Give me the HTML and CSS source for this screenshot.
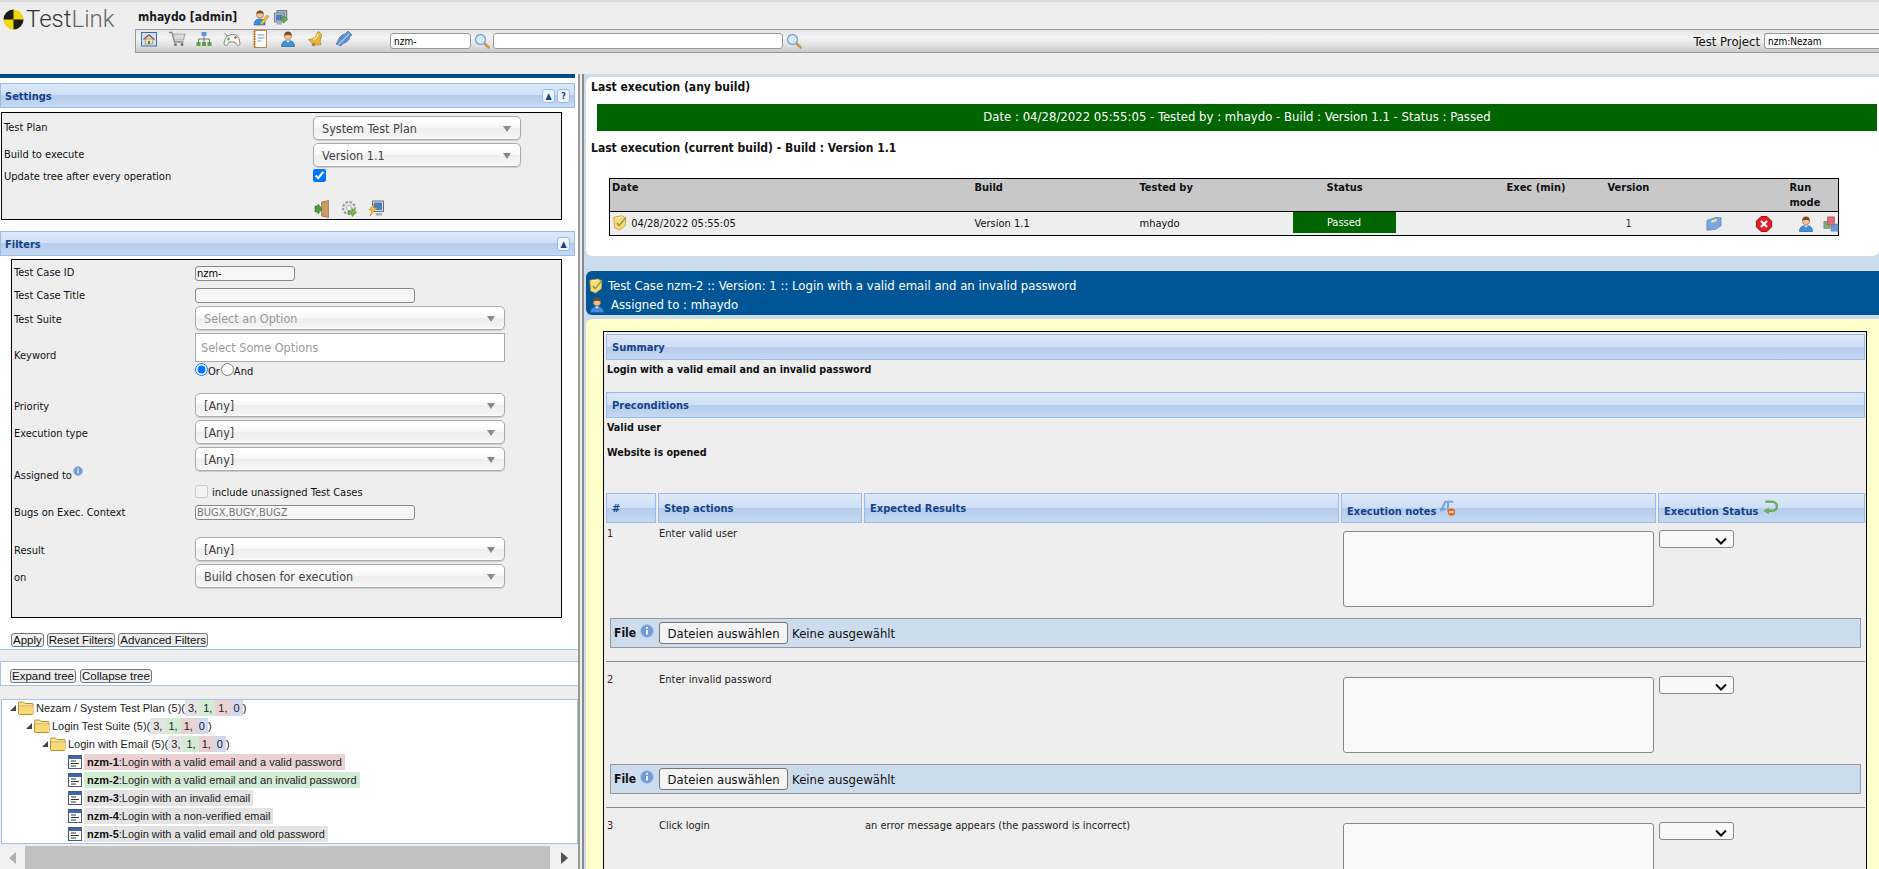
FILE: index.html
```html
<!DOCTYPE html>
<html>
<head>
	<meta charset="UTF-8">
	<title>TestLink - Execute</title>
	<link rel="stylesheet" href="styles.css">
</head>

<body>
	<svg class="defs" width="0" height="0">
		<symbol id="i-user" viewBox="0 0 16 16">
			<path d="M1.500 15.500c0-4 2.500-6 6.500-6s6.500 2 6.500 6z" fill="#3f8fe0" stroke="#2a5d9c" stroke-width=".7"/>
			<path d="M6 9.500l2 2 2-2z" fill="#fff"/>
			<circle cx="8" cy="5.200" r="3.600" fill="#f2c39a" stroke="#a8713f" stroke-width=".6"/>
			<path d="M4.200 5c0-3 1.500-4.400 3.800-4.400S11.800 2 11.800 5C10.500 3.700 6 3.500 4.200 5z" fill="#7a4a22"/>
		</symbol>
		<symbol id="i-note" viewBox="0 0 16 18">
			<path d="M1 2.500L10 1l4.500 2-.5 9-6.500 5L2 14.500z" fill="#f7da7c" stroke="#c2922a" stroke-width=".8"/>
			<path d="M3 3.500l7-1.200" stroke="#fff2b8"/>
			<path d="M4.500 9l2.500 3 7.500-9" fill="none" stroke="#8a9a3a" stroke-width="1.600"/>
		</symbol>
		<symbol id="i-search" viewBox="0 0 16 16">
			<path d="M10 10l4.500 4.500" stroke="#c79a4a" stroke-width="2.600" stroke-linecap="round"/>
			<circle cx="6.500" cy="6.500" r="5" fill="#dbeafa" stroke="#7ba3d1" stroke-width="1.300"/>
		</symbol>
		<symbol id="i-folder" viewBox="0 0 16 14">
			<path d="M.5 3.500V2q0-1 1-1h4l1.500 1.500h7q1 0 1 1V12.500q0 1-1 1h-12.500q-1 0-1-1z" fill="#f6e3a1" stroke="#b8902c"/>
			<path d="M1 5h14" stroke="#c9a23e"/>
			<path d="M1 5.500h14V12.500q0 .5-.5.5h-13q-.5 0-.5-.5z" fill="#f9da72"/>
		</symbol>
		<symbol id="i-leaf" viewBox="0 0 14 14">
			<rect x=".5" y=".5" width="13" height="13" fill="#fff" stroke="#4a5a78"/>
			<rect x="1" y="1" width="12" height="3" fill="#3f66ad"/>
			<path d="M3 6h5M3 8.500h8M3 11h5" stroke="#333"/>
		</symbol>
		<symbol id="i-info" viewBox="0 0 14 14">
			<circle cx="7" cy="7" r="6.300" fill="#6f9ad6" stroke="#9dbbe4"/>
			<path d="M7 6v4.500" stroke="#fff" stroke-width="1.800"/>
			<circle cx="7" cy="3.800" r="1.100" fill="#fff"/>
		</symbol>
		<symbol id="i-tool-home" viewBox="0 0 16 16">
			<rect x=".5" y="1.500" width="15" height="13.500" fill="#cfe0f5" stroke="#3a6ea8"/>
			<path d="M2.500 8.500L8 4l5.500 4.500" fill="none" stroke="#a5562c" stroke-width="1.400"/>
			<rect x="4.500" y="8" width="7" height="5" fill="#f3e1b5" stroke="#8a6a3a" stroke-width=".5"/>
			<rect x="7" y="10" width="2" height="3" fill="#3d8a3d"/>
		</symbol>
		<symbol id="i-tool-cart" viewBox="0 0 18 16">
			<path d="M1 1.500h3l2.500 9.500h9" fill="none" stroke="#8d8d8d" stroke-width="1.300"/>
			<path d="M4.500 3h12.500l-1.500 6H6z" fill="#c8c8c8" stroke="#8d8d8d" stroke-width=".7"/>
			<path d="M7 5h9M7 7h8.500M8 3v6M11 3v6M14 3v6" stroke="#eee" stroke-width=".6"/>
			<circle cx="7.500" cy="13.500" r="1.500" fill="#777"/>
			<circle cx="14" cy="13.500" r="1.500" fill="#777"/>
		</symbol>
		<symbol id="i-tool-tree" viewBox="0 0 16 16">
			<rect x="5.500" y="1" width="5" height="4" fill="#5f93d6"/>
			<path d="M8 5v3M2.500 11V8h11v3M8 8v3" fill="none" stroke="#777"/>
			<rect x=".5" y="11" width="4" height="4" fill="#5da04a"/>
			<rect x="6" y="11" width="4" height="4" fill="#5da04a"/>
			<rect x="11.500" y="11" width="4" height="4" fill="#5da04a"/>
		</symbol>
		<symbol id="i-tool-pad" viewBox="0 0 18 16">
			<path d="M1.500 2l3 3M4 5q5-2.500 9.500-1 3.500 3 3.500 8.500 0 2-1.500 2-2 0-3.500-3.500h-6q-1.500 3.500-3 3.500T1 12.500Q1.200 8 4 5z" fill="#f4f4f4" stroke="#888"/>
			<circle cx="12.500" cy="6.500" r="1.300" fill="#d2504a"/>
			<path d="M4 8h3M5.500 6.500v3" stroke="#5aa04a" stroke-width="1.200"/>
		</symbol>
		<symbol id="i-tool-book" viewBox="0 0 14 18">
			<rect x="1.500" y=".5" width="12" height="17" fill="#fbfbfb" stroke="#b98a4a"/>
			<path d="M1.500 1v16" stroke="#c5762e" stroke-width="2.200" stroke-dasharray="1.500 1"/>
			<path d="M4.500 5h7M4.500 8h7M4.500 11h4" stroke="#7ba3d1" stroke-width="1.100"/>
		</symbol>
		<symbol id="i-tool-bell" viewBox="0 0 18 18">
			<path d="M12 1.500c3 1 4.500 4 3 6.500-1 2-1 4 0 6.500-4.500 1.500-9 -.5-12.500-5 3.500-.5 6-1.500 7.500-3.500 1-1.500 1-3 2-4.500z" fill="#e9b63e" stroke="#a87a1f" stroke-width=".7"/>
			<circle cx="7.500" cy="14.500" r="1.800" fill="#b9822a"/>
			<path d="M12 4q-1 4-5 5.500" stroke="#f8e7a8" fill="none" stroke-width="1.200"/>
		</symbol>
		<symbol id="i-tool-plug" viewBox="0 0 18 18">
			<path d="M13 1l4 4-2 1.500-1 3-3 3-3 1-2 2.500-5-2 2-3 1-3 3-3 3-1z" fill="#5d8fd0" stroke="#3d6ba8" stroke-width=".6"/>
			<path d="M3.500 14.500L14 4" stroke="#a9c6ea" stroke-width="1.400"/>
		</symbol>
		<symbol id="i-edit-user" viewBox="0 0 16 16">
			<circle cx="7" cy="4.500" r="3.500" fill="#f2c39a" stroke="#8a5a2a" stroke-width=".6"/>
			<path d="M3.500 4c0-2.400 1.500-3.500 3.500-3.500s3.500 1 3.500 3.500C9 3 5 3 3.500 4z" fill="#7a4a22"/>
			<path d="M1 15c0-4 2-6 6-6s5 2 5 4v2z" fill="#3f8fe0" stroke="#2a5d9c" stroke-width=".6"/>
			<path d="M7 15l1-3 6-7 2 1.500-6 7.500z" fill="#eec14a" stroke="#a87a1f" stroke-width=".6"/>
		</symbol>
		<symbol id="i-monitor" viewBox="0 0 16 18">
			<rect x="3.500" y=".5" width="11" height="10" fill="#aab4bf" stroke="#67707a"/>
			<rect x=".5" y="3.500" width="11" height="10" fill="#d9dfe5" stroke="#67707a"/>
			<rect x="2" y="5" width="8" height="7" fill="#4f7fb8"/>
			<rect x="3" y="14.500" width="6" height="2" fill="#a5adb6"/>
			<path d="M8 9h3V6.500l4.500 4-4.500 4V12H8z" fill="#6fb04a" stroke="#3f7a2a" stroke-width=".6"/>
		</symbol>
		<symbol id="i-door" viewBox="0 0 16 18">
			<path d="M7.500 2l7-1.500v17l-7-1.500z" fill="#c99a62" stroke="#8a5f2c" stroke-width=".6"/>
			<path d="M1 6h3V4l4 5-4 5v-2H1z" fill="#4f9a46" stroke="#2f6a2a" stroke-width=".6"/>
		</symbol>
		<symbol id="i-gear" viewBox="0 0 16 18">
			<circle cx="8" cy="8" r="6" fill="#e6e6e6" stroke="#999" stroke-width="2" stroke-dasharray="2.500 1.500"/>
			<circle cx="8" cy="8" r="2.500" fill="#fff" stroke="#aaa"/>
			<path d="M7 11h4V8.500l4.500 4-4.500 4V14H7z" fill="#7ab84a" stroke="#4a8a2a" stroke-width=".6"/>
		</symbol>
		<symbol id="i-bolt" viewBox="0 0 16 18">
			<rect x="4.500" y="1" width="11" height="10.500" fill="#d9dfe5" stroke="#67707a"/>
			<rect x="6" y="2.500" width="8" height="7.500" fill="#4f7fb8"/>
			<rect x="8" y="13" width="6" height="2.500" fill="#a5adb6"/>
			<path d="M6 4L1 10h3l-2 6 7-8H5.500z" fill="#f3c63f" stroke="#b98a1f" stroke-width=".6"/>
		</symbol>
		<symbol id="i-open" viewBox="0 0 18 16">
			<path d="M1 4l10-3.500 6 .5v9l-6 4-10 1z" fill="#7aa7e0" stroke="#4f7fb8" stroke-width=".7"/>
			<path d="M6 4l6-2v3l-6 2z" fill="#f3e5a0"/>
		</symbol>
		<symbol id="i-delete" viewBox="0 0 16 16">
			<path d="M5 .5h6L15.500 5v6L11 15.500H5L.5 11V5z" fill="#e21f26" stroke="#a81218"/>
			<path d="M5 5l6 6M11 5l-6 6" stroke="#fff" stroke-width="2.200"/>
		</symbol>
		<symbol id="i-cubes" viewBox="0 0 18 18">
			<rect x="1" y="6" width="7" height="8" fill="#7cae7a" stroke="#4f7f4f" stroke-width=".6"/>
			<rect x="9" y="9" width="8" height="8" fill="#6f9ad6" stroke="#4f7fb8" stroke-width=".6"/>
			<rect x="5" y="1" width="8" height="9" fill="#de6a72" stroke="#a8434a" stroke-width=".6"/>
		</symbol>
		<symbol id="i-eraser" viewBox="0 0 14 14">
			<path d="M1 10L4.500 1.500h7M7 1.500V10M0 8h5" fill="none" stroke="#7ba3dd" stroke-width="1.800"/>
			<circle cx="10" cy="10.500" r="3.200" fill="#e2661f"/>
			<path d="M8 10.500h4" stroke="#fff" stroke-width="1.200"/>
		</symbol>
		<symbol id="i-back" viewBox="0 0 14 14">
			<path d="M3 1.500h6a4 4 0 010 8H5" fill="none" stroke="#6cae5a" stroke-width="2.200"/>
			<path d="M6 6.500v6L1 9.500z" fill="#6cae5a"/>
		</symbol>
	</svg>

	<div id="header">
		<div class="logo-row">
			<div class="logo">
				<svg class="logo-mark" viewBox="0 0 22 22">
					<circle cx="11" cy="11" r="10.500" fill="#f0d808"/>
					<path d="M11 11V.5a10.500 10.500 0 00-10.500 10.500zM11 11v10.500A10.500 10.500 0 0021.500 11z" fill="#1c1c1c"/>
				</svg>
				<span class="logo-text">Test<span class="logo-link">Link</span></span>
			</div>
			<div class="header-main">
				<div class="user-line">
					<span class="user-name">mhaydo [admin]</span>
					<svg class="ic ic-16"><use href="#i-edit-user"/></svg>
					<svg class="ic ic-16"><use href="#i-monitor"/></svg>
				</div>
				<div class="toolbar">
					<div class="tool-icons">
						<svg class="ic ic-16"><use href="#i-tool-home"/></svg>
						<svg class="ic ic-18"><use href="#i-tool-cart"/></svg>
						<svg class="ic ic-16"><use href="#i-tool-tree"/></svg>
						<svg class="ic ic-18"><use href="#i-tool-pad"/></svg>
						<svg class="ic ic-18"><use href="#i-tool-book"/></svg>
						<svg class="ic ic-16"><use href="#i-user"/></svg>
						<svg class="ic ic-18"><use href="#i-tool-bell"/></svg>
						<svg class="ic ic-18"><use href="#i-tool-plug"/></svg>
					</div>
					<input class="tool-input tool-id" type="text" value="nzm-">
					<svg class="ic ic-16"><use href="#i-search"/></svg>
					<input class="tool-input tool-search" type="text">
					<svg class="ic ic-16"><use href="#i-search"/></svg>
					<span class="project-label">Test Project</span>
					<input class="tool-input tool-project" type="text" value="nzm:Nezam">
				</div>
			</div>
		</div>
	</div>

	<div id="main">
		<div id="left">
			<div class="left-top"></div>

			<div class="section-head">
				<span>Settings</span>
				<span class="head-btns"><span class="head-btn">&#9650;</span><span class="head-btn">?</span></span>
			</div>
			<div class="left-body settings-body">
				<div class="box settings-box">
					<label class="lbl">Test Plan</label>
					<div class="fake-select dark">System Test Plan</div>
					<label class="lbl">Build to execute</label>
					<div class="fake-select dark">Version 1.1</div>
					<label class="lbl">Update tree after every operation</label>
					<input class="check" type="checkbox" checked>
					<span></span>
					<div class="settings-icons">
						<svg class="ic ic-18"><use href="#i-door"/></svg>
						<svg class="ic ic-18"><use href="#i-gear"/></svg>
						<svg class="ic ic-18"><use href="#i-bolt"/></svg>
					</div>
				</div>
			</div>

			<div class="section-head filters-head">
				<span>Filters</span>
				<span class="head-btns"><span class="head-btn">&#9650;</span></span>
			</div>
			<div class="left-body filters-body">
				<div class="box filter-box">
					<label class="lbl">Test Case ID</label>
					<input class="text-in w-short" type="text" value="nzm-">
					<label class="lbl">Test Case Title</label>
					<input class="text-in w-long" type="text">
					<label class="lbl lbl-sel">Test Suite</label>
					<div class="fake-select muted">Select an Option</div>
					<label class="lbl lbl-key">Keyword</label>
					<div>
						<div class="fake-multi">Select Some Options</div>
						<div class="radios">
							<input type="radio" name="kw" checked><span>Or</span>
							<input type="radio" name="kw"><span>And</span>
						</div>
					</div>
					<label class="lbl lbl-sel">Priority</label>
					<div class="fake-select">[Any]</div>
					<label class="lbl lbl-sel">Execution type</label>
					<div class="fake-select">[Any]</div>
					<label class="lbl lbl-assign">Assigned to<svg class="ic ic-10"><use href="#i-info"/></svg></label>
					<div class="fake-select">[Any]</div>
					<span></span>
					<div class="include"><input class="check-off" type="checkbox" disabled><span>include unassigned Test Cases</span></div>
					<label class="lbl">Bugs on Exec. Context</label>
					<input class="text-in w-long hint" type="text" value="BUGX,BUGY,BUGZ">
					<label class="lbl lbl-sel">Result</label>
					<div class="fake-select">[Any]</div>
					<label class="lbl lbl-sel">on</label>
					<div class="fake-select">Build chosen for execution</div>
				</div>
				<div class="filter-btns">
					<button class="btn">Apply</button>
					<button class="btn">Reset Filters</button>
					<button class="btn">Advanced Filters</button>
				</div>
			</div>

			<div class="tree-area">
				<div class="tree-btns">
					<button class="btn">Expand tree</button>
					<button class="btn">Collapse tree</button>
				</div>

				<div class="tree">
					<div class="node lv0"><span class="tog"></span><svg class="folder"><use href="#i-folder"/></svg>Nezam / System Test Plan (5)(<span class="c-n">3,</span><span class="c-p">1,</span><span class="c-f">1,</span><span class="c-b">0</span>)</div>
					<div class="node lv1"><span class="tog"></span><svg class="folder"><use href="#i-folder"/></svg>Login Test Suite (5)(<span class="c-n">3,</span><span class="c-p">1,</span><span class="c-f">1,</span><span class="c-b">0</span>)</div>
					<div class="node lv2"><span class="tog"></span><svg class="folder"><use href="#i-folder"/></svg>Login with Email (5)(<span class="c-n">3,</span><span class="c-p">1,</span><span class="c-f">1,</span><span class="c-b">0</span>)</div>
					<div class="node leaf"><svg class="leaf-ic"><use href="#i-leaf"/></svg><span class="c-f"><b>nzm-1</b>:Login with a valid email and a valid password</span></div>
					<div class="node leaf"><svg class="leaf-ic"><use href="#i-leaf"/></svg><span class="c-p"><b>nzm-2</b>:Login with a valid email and an invalid password</span></div>
					<div class="node leaf"><svg class="leaf-ic"><use href="#i-leaf"/></svg><span class="c-n"><b>nzm-3</b>:Login with an invalid email</span></div>
					<div class="node leaf"><svg class="leaf-ic"><use href="#i-leaf"/></svg><span class="c-n"><b>nzm-4</b>:Login with a non-verified email</span></div>
					<div class="node leaf"><svg class="leaf-ic"><use href="#i-leaf"/></svg><span class="c-n"><b>nzm-5</b>:Login with a valid email and old password</span></div>
				</div>
				<div class="hscroll">
					<span class="arrow-l"></span>
					<span class="thumb"></span>
					<span class="arrow-r"></span>
				</div>
			</div>
		</div>

		<div id="splitter"></div>

		<div id="right">
			<div class="last-exec">
				<div class="exec-title">Last execution (any build)</div>
				<div class="exec-banner">Date : 04/28/2022 05:55:05 - Tested by : mhaydo - Build : Version 1.1 - Status : Passed</div>
				<div class="exec-title current">Last execution (current build) - Build : Version 1.1</div>
				<table class="exec-table">
					<tr>
						<th class="col-date">Date</th>
						<th class="col-build">Build</th>
						<th class="col-tester">Tested by</th>
						<th class="col-status">Status</th>
						<th class="col-min">Exec (min)</th>
						<th class="col-ver">Version</th>
						<th class="col-a"></th>
						<th class="col-b"></th>
						<th class="col-run">Run<br>mode</th>
					</tr>
					<tr>
						<td><svg class="ic ic-16 note-ic"><use href="#i-note"/></svg> 04/28/2022 05:55:05</td>
						<td>Version 1.1</td>
						<td>mhaydo</td>
						<td class="passed-wrap"><div class="passed">Passed</div></td>
						<td></td>
						<td class="ver">1</td>
						<td><svg class="ic ic-16"><use href="#i-open"/></svg></td>
						<td><svg class="ic ic-16"><use href="#i-delete"/></svg></td>
						<td class="run-ics"><svg class="ic ic-16"><use href="#i-user"/></svg><svg class="ic ic-16 cubes"><use href="#i-cubes"/></svg></td>
					</tr>
				</table>
			</div>

			<div class="case-bar">
				<div class="case-line"><svg class="ic ic-16"><use href="#i-note"/></svg>Test Case nzm-2 :: Version: 1 :: Login with a valid email and an invalid password</div>
				<div class="case-line assigned"><svg class="ic ic-16"><use href="#i-user"/></svg>Assigned to : mhaydo</div>
			</div>

			<div class="case-body">
				<div class="case-box">
					<div class="section-head small">Summary</div>
					<div class="para bold">Login with a valid email and an invalid password</div>
					<div class="section-head small precond">Preconditions</div>
					<div class="para bold">Valid user</div>
					<div class="para bold second">Website is opened</div>

					<div class="step-grid step-head">
						<div class="section-head cell">#</div>
						<div class="section-head cell">Step actions</div>
						<div class="section-head cell">Expected Results</div>
						<div class="section-head cell low">Execution notes <svg class="ic ic-16 raised"><use href="#i-eraser"/></svg></div>
						<div class="section-head cell low">Execution Status <svg class="ic ic-16 raised"><use href="#i-back"/></svg></div>
					</div>

					<div class="step first">
						<div class="step-grid">
							<div class="step-txt num">1</div>
							<div class="step-txt">Enter valid user</div>
							<div class="step-txt"></div>
							<textarea class="notes"></textarea>
							<div><select class="status"><option></option></select></div>
						</div>
						<div class="file-bar"><b>File</b><svg class="ic ic-14"><use href="#i-info"/></svg><button class="file-btn">Dateien auswählen</button><span>Keine ausgewählt</span></div>
					</div>

					<div class="step">
						<div class="step-grid">
							<div class="step-txt num">2</div>
							<div class="step-txt">Enter invalid password</div>
							<div class="step-txt"></div>
							<textarea class="notes"></textarea>
							<div><select class="status"><option></option></select></div>
						</div>
						<div class="file-bar"><b>File</b><svg class="ic ic-14"><use href="#i-info"/></svg><button class="file-btn">Dateien auswählen</button><span>Keine ausgewählt</span></div>
					</div>

					<div class="step">
						<div class="step-grid">
							<div class="step-txt num">3</div>
							<div class="step-txt">Click login</div>
							<div class="step-txt">an error message appears (the password is incorrect)</div>
							<textarea class="notes"></textarea>
							<div><select class="status"><option></option></select></div>
						</div>
					</div>
				</div>
			</div>
		</div>
	</div>
</body>
</html>
```

FILE: styles.css
```css
*
{
	box-sizing: border-box;
}
html, body
{
	margin: 0;
	height: 100%;
	overflow: hidden;
}
body
{
	background: #eeeeee;
	color: #111111;
	font-family: "DejaVu Sans Condensed", "DejaVu Sans", sans-serif;
	font-stretch: condensed;
	font-size: 11px;
	line-height: 15px;
}
.defs
{
	position: absolute;
}
.ic
{
	display: inline-block;
	flex: none;
	vertical-align: middle;
}
.ic-10 { width: 10px; height: 10px; vertical-align: 3px; margin-left: 1px; }
.ic-14 { width: 14px; height: 14px; }
.ic-16 { width: 16px; height: 16px; }
.ic-18 { width: 18px; height: 18px; }

/* ---------- header ---------- */
#header
{
	height: 74px;
	border-top: 2px solid #dddddd;
	padding-top: 1px;
	overflow: hidden;
}
.logo-row
{
	display: flex;
}
.logo
{
	width: 135px;
	padding: 5px 0 0 3px;
	display: flex;
	align-items: center;
	height: 27px;
}
.logo-mark
{
	width: 21px;
	height: 21px;
	flex: none;
}
.logo-text
{
	font-family: Roboto, sans-serif;
	font-stretch: normal;
	font-weight: 300;
	font-size: 24px;
	color: #333333;
	margin-left: 2px;
}
.logo-link
{
	color: #666666;
}
.header-main
{
	flex: 1;
	min-width: 0;
}
.user-line
{
	height: 26px;
	padding: 3px 0 0 3px;
	display: flex;
	align-items: center;
	gap: 4px;
}
.user-name
{
	font-size: 12px;
	font-weight: bold;
	color: #1a1a1a;
	margin-right: 12px;
}
.toolbar
{
	height: 24px;
	display: flex;
	align-items: center;
	background: linear-gradient(#e4e4e4, #f4f4f4 35%, #e0e0e0 70%, #c9c9c9);
	border: 1px solid #9a9a9a;
	border-right: 0;
	padding-left: 5px;
}
.tool-icons
{
	display: flex;
	align-items: center;
	gap: 10.5px;
	width: 249px;
	margin-top: -4px;
}
.tool-input
{
	height: 16px;
	border: 1px solid #999999;
	border-radius: 3px;
	background: #ffffff;
	font: 10px "DejaVu Sans Condensed", "DejaVu Sans", sans-serif;
	font-stretch: condensed;
	padding: 0 3px;
	outline: none;
}
.tool-id
{
	width: 81px;
	margin-right: 3px;
}
.tool-search
{
	width: 290px;
	margin: 0 3px 0 3px;
}
.project-label
{
	margin-left: auto;
	font-size: 13px;
	margin-right: 4px;
}
.tool-project
{
	width: 115px;
	border-right: 0;
	border-radius: 3px 0 0 3px;
}

/* ---------- left column ---------- */
#main
{
	display: flex;
	height: 795px;
}
#left
{
	width: 578px;
	flex: none;
	background: #ffffff;
	overflow: hidden;
}
.left-top
{
	height: 9px;
	width: 575px;
	background: linear-gradient(#00467e, #005596 4px, #005596 4px, #ffffff 4px);
}
.section-head
{
	height: 26px;
	border: 1px solid #99bbe8;
	background: linear-gradient(#dce8f8, #cfdff5 48%, #b4cbec 50%, #c6d9f2);
	color: #15428b;
	font-weight: bold;
	font-size: 11px;
	padding: 1px 4px 0;
	display: flex;
	align-items: center;
	justify-content: space-between;
}
#left .section-head
{
	width: 575px;
	height: 25px;
}
.head-btns
{
	display: flex;
	gap: 2px;
	margin-top: -1px;
}
.head-btn
{
	width: 13px;
	height: 14px;
	border: 1px solid #99bbe8;
	border-radius: 3px;
	background: #eef4fc;
	color: #15428b;
	font-size: 9px;
	line-height: 12px;
	text-align: center;
}
.left-body
{
	padding: 4px 0 0 1px;
}
.settings-body
{
	height: 123px;
}
.box
{
	border: 1px solid #000000;
	background: #eeeeee;
}
.settings-box
{
	width: 561px;
	height: 108px;
	padding: 3px 0 0 2px;
	display: grid;
	grid-template-columns: 309px 208px;
	grid-template-rows: 27px 27px 28px 1fr;
}
.lbl
{
	display: block;
	align-self: start;
}
.settings-box .lbl
{
	margin-top: 4px;
}
.settings-box .lbl:nth-of-type(3)
{
	margin-top: -1px;
}
.fake-select
{
	height: 24px;
	border: 1px solid #aaaaaa;
	border-radius: 5px;
	background: linear-gradient(#ffffff 20%, #f6f6f6 50%, #eeeeee 52%, #f4f4f4 90%, #ffffff);
	box-shadow: 0 0 2px #ffffff inset, 0 1px 1px rgba(0, 0, 0, .15);
	color: #444444;
	font-size: 12.500px;
	line-height: 24px;
	padding-left: 8px;
	position: relative;
}
.fake-select::after
{
	content: "";
	position: absolute;
	right: 9px;
	top: 9px;
	border: 4px solid transparent;
	border-top: 6px solid #888888;
	border-bottom: 0;
}
.fake-select.muted
{
	color: #999999;
}
.check
{
	width: 13px;
	height: 13px;
	margin: -1px 0 0 0;
	accent-color: #0075ff;
}
.settings-icons
{
	display: flex;
	gap: 9px;
	padding-top: 2px;
}

.filters-body
{
	height: 394px;
	width: 578px;
	padding: 3px 0 0 11px;
	border-bottom: 1px solid #a4c4ec;
}
.filter-box
{
	width: 551px;
	height: 359px;
	padding: 6px 0 0 2px;
	display: grid;
	grid-template-columns: 181px 310px;
	grid-template-rows: 22px 18px 27px 60px 27px 27px 38px 20px 32px 27px 27px;
}
.filter-box .lbl:first-child { margin-top: -1px; }
.lbl-sel { margin-top: 5px; }
.filter-box .lbl-sel { margin-top: 6px; }
.lbl-key { margin-top: 15px; }
.lbl-assign { margin-top: 19px; }
.text-in
{
	display: block;
	height: 15px;
	border: 1px solid #888888;
	border-radius: 3px;
	background: #f6f6f6;
	font: 11px "DejaVu Sans Condensed", "DejaVu Sans", sans-serif;
	font-stretch: condensed;
	padding: 0 1px;
	outline: none;
}
.w-short { width: 100px; }
.w-long { width: 220px; }
.hint { color: #777777; }
.fake-multi
{
	height: 29px;
	border: 1px solid #aaaaaa;
	background: #ffffff;
	color: #999999;
	font-size: 12.500px;
	line-height: 28px;
	padding-left: 5px;
}
.radios
{
	display: flex;
	align-items: center;
	height: 16px;
	margin-top: 1px;
}
.radios input
{
	width: 13px;
	height: 13px;
	margin: -3px 0 0 0;
}
.radios span
{
	margin-right: 1px;
}
.include
{
	display: flex;
	gap: 3px;
	align-items: center;
	height: 14px;
}
.check-off
{
	width: 13px;
	height: 13px;
	margin: -2px 1px 0 0;
}
.filter-btns
{
	padding-top: 15px;
	display: flex;
	gap: 3px;
}
.btn
{
	height: 14px;
	padding: 0 1px;
	border: 1px solid #777777;
	border-radius: 3px;
	background: #eeeeee;
	color: #111111;
	font-family: "Liberation Sans", sans-serif;
	font-size: 11.500px;
	line-height: 12px;
}
.tree-area
{
	background: #eeeeee;
	padding-top: 11px;
	height: 219px;
}
.tree-btns
{
	width: 578px;
	height: 25px;
	border: 1px solid #a4c4ec;
	border-right: 0;
	background: #ffffff;
	padding: 7px 0 0 9px;
	display: flex;
	gap: 4px;
}
.tree
{
	width: 577px;
	height: 145px;
	margin: 13px 0 0 1px;
	border: 1px solid #a4c4ec;
	background: #ffffff;
	font-family: "Liberation Sans", sans-serif;
	font-size: 11px;
	line-height: 18px;
	color: #222222;
	overflow: hidden;
}
.node
{
	height: 18px;
	padding-bottom: 2px;
	display: flex;
	align-items: center;
	white-space: pre;
}
.lv0 { padding-left: 8px; }
.lv1 { padding-left: 24px; }
.lv2 { padding-left: 40px; }
.leaf { padding-left: 66px; }
.tog
{
	width: 0;
	height: 0;
	margin-right: 2px;
	border-style: solid;
	border-width: 0 0 6px 6px;
	border-color: transparent transparent #444444 transparent;
}
.folder
{
	width: 16px;
	height: 14px;
	margin-right: 2px;
	flex: none;
}
.leaf-ic
{
	width: 14px;
	height: 14px;
	flex: none;
	margin-right: 2px;
}
.c-n, .c-p, .c-f, .c-b
{
	padding: 0 3px;
	height: 16px;
	line-height: 16px;
}
.c-n { background: #e4e4e4; }
.c-p { background: #d2ecd4; }
.c-f { background: #ead2d2; }
.c-b { background: #d4d8ee; }
.leaf b
{
	color: #111111;
}
.hscroll
{
	height: 23px;
	margin-top: 2px;
	display: flex;
	align-items: center;
	width: 578px;
	background: #f1f1f1;
}
.arrow-l, .arrow-r
{
	width: 0;
	height: 0;
	border-style: solid;
	border-width: 6px 0;
	border-color: transparent;
}
.arrow-l
{
	border-right: 7px solid #b0b0b0;
	margin: 0 9px 0 9px;
}
.thumb
{
	width: 525px;
	height: 23px;
	background: #c1c1c1;
}
.arrow-r
{
	border-left: 7px solid #505050;
	margin-left: 11px;
}

#splitter
{
	width: 6px;
	flex: none;
	background: #eeeeee;
	border-left: 2px solid #999999;
	border-right: 2px solid #8a8a8a;
}

/* ---------- right column ---------- */
#right
{
	flex: 1;
	min-width: 0;
	background: #cddcec;
	padding: 3px 0 0 2px;
	overflow: hidden;
}
.last-exec
{
	height: 179px;
	background: #ffffff;
	border-radius: 6px 0 6px 6px;
	padding: 2px 2px 0 5px;
}
.exec-title
{
	font-size: 12px;
	font-weight: bold;
	line-height: 16px;
}
.exec-banner
{
	margin: 9px 0 0 6px;
	height: 27px;
	background: #006400;
	color: #ffffff;
	font-size: 13px;
	line-height: 26px;
	text-align: center;
}
.current
{
	margin-top: 9px;
}
.exec-table
{
	width: 1230px;
	margin: 22px 0 0 18px;
	border: 1px solid #000000;
	border-collapse: collapse;
	table-layout: fixed;
}
.exec-table th
{
	height: 33px;
	background: #c8c8c8;
	border-bottom: 1px solid #000000;
	font-weight: bold;
	font-size: 11px;
	text-align: left;
	vertical-align: top;
	padding: 1px 2px 0;
}
.exec-table td
{
	height: 23px;
	background: #eeeeee;
	padding: 0 2px;
}
.col-date { width: 363px; }
.col-build { width: 165px; }
.col-tester { width: 155px; }
.exec-table .col-status { width: 212px; padding-left: 34px; }
.col-min { width: 101px; }
.col-ver { width: 98px; }
.col-a { width: 50px; }
.col-b { width: 34px; }
.note-ic
{
	margin-top: -2px;
}
.exec-table .passed-wrap
{
	padding: 0 0 2px;
	vertical-align: top;
}
.passed
{
	width: 103px;
	height: 21px;
	background: #006400;
	color: #ffffff;
	line-height: 21px;
	text-align: center;
}
.exec-table .ver
{
	color: #5a1a5a;
	padding-left: 20px;
}
.exec-table .run-ics
{
	padding: 0 0 0 10px;
	white-space: nowrap;
}
.cubes
{
	margin-left: 9px;
}
.case-bar
{
	height: 44px;
	margin-top: 15px;
	background: #005596;
	border-radius: 6px 0 0 6px;
	color: #ffffff;
	font-size: 13px;
	padding: 5px 0 0 2px;
}
.case-line
{
	height: 19px;
	display: flex;
	align-items: center;
	gap: 4px;
}
.assigned
{
	padding-left: 1px;
	gap: 6px;
}
.case-body
{
	margin-top: 4px;
	height: 560px;
	background: #ffffcc;
	border-radius: 6px 0 0 0;
	padding: 12px 12px 0 17px;
}
.case-box
{
	border: 1px solid #000000;
	background: #eeeeee;
	height: 560px;
	padding: 2px 1px 0 2px;
}
.section-head.small
{
	padding-left: 5px;
	justify-content: flex-start;
}
.para
{
	padding: 2px 0 0 1px;
	height: 32px;
	line-height: 16px;
	font-size: 10.700px;
}
.bold
{
	font-weight: bold;
}
.precond + .para
{
	height: 25px;
}
.para.second
{
	height: 50px;
}
.step-grid
{
	display: grid;
	grid-template-columns: 50px 204px 475px 315px 207px;
	gap: 0 2px;
}
.step-head .cell
{
	height: 30px;
	padding-left: 5px;
	justify-content: flex-start;
}
.step-head .low
{
	align-items: flex-end;
	padding-bottom: 3px;
	white-space: pre;
}
.raised
{
	margin: -5px 0 3px 0;
}
.step
{
	height: 146px;
	border-bottom: 1px solid #888888;
	padding-top: 10px;
}
.step.first
{
	height: 138px;
	padding-top: 2px;
	margin-top: 1px;
}
.step-txt
{
	color: #222222;
	padding-left: 1px;
}
.num
{
	color: #5a1a1a;
}
.notes
{
	display: block;
	width: 311px;
	height: 76px;
	margin: 5px 0 0 2px;
	border: 1px solid #888888;
	border-radius: 3px;
	background: #f9f9f9;
	resize: none;
	outline: none;
}
.status
{
	display: block;
	width: 75px;
	height: 18px;
	margin: 4px 0 0 1px;
	border: 1px solid #888888;
	border-radius: 3px;
	appearance: none;
	background: #f8f8f8 url("data:image/svg+xml,%3Csvg xmlns='http://www.w3.org/2000/svg' width='12' height='8'%3E%3Cpath d='M1 1.500l5 5 5-5' fill='none' stroke='%23111' stroke-width='2'/%3E%3C/svg%3E") no-repeat 55px 6px;
}
.file-bar
{
	height: 30px;
	width: 1251px;
	margin: 11px 0 0 4px;
	border: 1px solid #999999;
	background: #cddcec;
	display: flex;
	align-items: center;
	padding-left: 3px;
	font-size: 13px;
}
.file-bar b
{
	font-size: 12px;
}
.file-bar .ic
{
	margin: -5px 5px 0 4px;
}
.file-btn
{
	width: 129px;
	height: 22px;
	border: 1px solid #777777;
	border-radius: 3px;
	background: #f4f4f4;
	font-family: "DejaVu Sans Condensed", "DejaVu Sans", sans-serif;
	font-stretch: condensed;
	font-size: 13px;
	color: #111111;
	padding: 0;
	margin-right: 4px;
}
```
